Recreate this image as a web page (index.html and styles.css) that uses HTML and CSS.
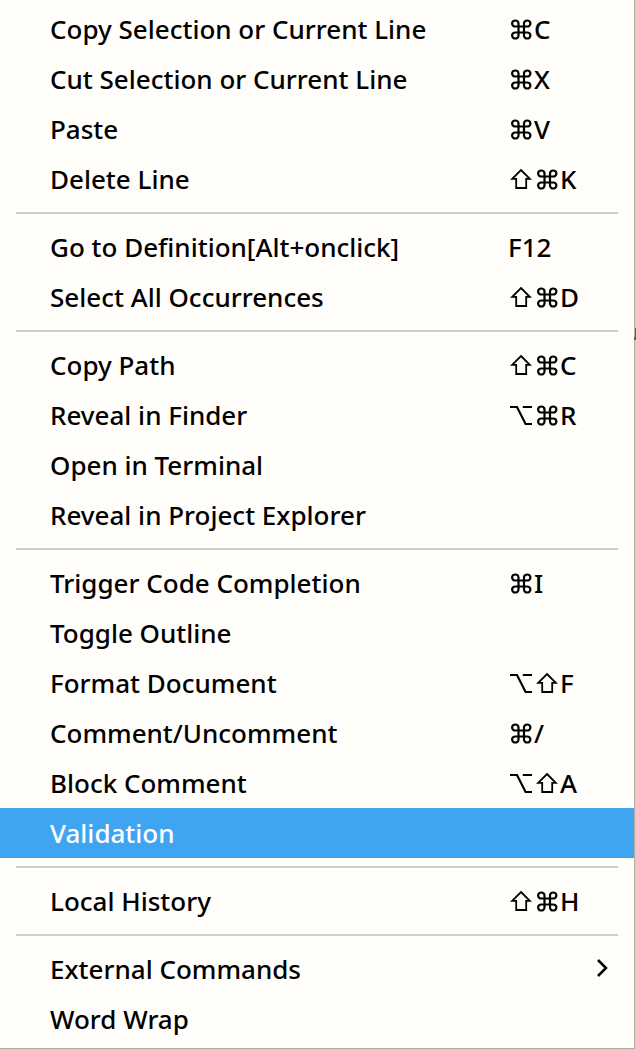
FILE: index.html
```html
<!DOCTYPE html>
<html lang="en">
<head>
<meta charset="utf-8">
<title>Editor context menu</title>
<link rel="stylesheet" href="styles.css">
</head>
<body>
<svg class="defs" aria-hidden="true">
  <symbol id="cmd" viewBox="0 0 26 22">
    <path d="M10.500 8.200V5.500A3.200 3 0 1 0 7.300 8.500H19.200A3.200 3 0 1 0 16 5.500V17.500A3.200 3 0 1 0 19.200 14.500H7.300A3.200 3 0 1 0 10.500 17.500Z" fill="none" stroke="currentColor" stroke-width="2.200"/>
  </symbol>
  <symbol id="shift" viewBox="0 0 26 22">
    <path d="M13 2 21.800 10.800H18.200V20H8.200V10.800H4.200Z" fill="none" stroke="currentColor" stroke-width="1.800"/>
  </symbol>
  <symbol id="opt" viewBox="0 0 26 22">
    <path d="M2 3H9L17.600 20H24M14.800 3H24" fill="none" stroke="currentColor" stroke-width="2.200"/>
  </symbol>
</svg>
<div class="menu" role="menu">
  <div class="group" role="group">
    <button class="item" role="menuitem"><span>Copy Selection or Current Line</span><kbd class="keys"><svg class="sym" role="img" aria-label="Command"><use href="#cmd"/></svg>C</kbd></button>
    <button class="item" role="menuitem"><span>Cut Selection or Current Line</span><kbd class="keys"><svg class="sym" role="img" aria-label="Command"><use href="#cmd"/></svg>X</kbd></button>
    <button class="item" role="menuitem"><span>Paste</span><kbd class="keys"><svg class="sym" role="img" aria-label="Command"><use href="#cmd"/></svg>V</kbd></button>
    <button class="item" role="menuitem"><span>Delete Line</span><kbd class="keys"><svg class="sym" role="img" aria-label="Shift"><use href="#shift"/></svg><svg class="sym" role="img" aria-label="Command"><use href="#cmd"/></svg>K</kbd></button>
  </div>
  <hr class="rule">
  <div class="group" role="group">
    <button class="item" role="menuitem"><span>Go to Definition[Alt+onclick]</span><kbd class="keys">F12</kbd></button>
    <button class="item" role="menuitem"><span>Select All Occurrences</span><kbd class="keys"><svg class="sym" role="img" aria-label="Shift"><use href="#shift"/></svg><svg class="sym" role="img" aria-label="Command"><use href="#cmd"/></svg>D</kbd></button>
  </div>
  <hr class="rule">
  <div class="group" role="group">
    <button class="item" role="menuitem"><span>Copy Path</span><kbd class="keys"><svg class="sym" role="img" aria-label="Shift"><use href="#shift"/></svg><svg class="sym" role="img" aria-label="Command"><use href="#cmd"/></svg>C</kbd></button>
    <button class="item" role="menuitem"><span>Reveal in Finder</span><kbd class="keys"><svg class="sym" role="img" aria-label="Option"><use href="#opt"/></svg><svg class="sym" role="img" aria-label="Command"><use href="#cmd"/></svg>R</kbd></button>
    <button class="item" role="menuitem"><span>Open in Terminal</span></button>
    <button class="item" role="menuitem"><span>Reveal in Project Explorer</span></button>
  </div>
  <hr class="rule">
  <div class="group" role="group">
    <button class="item" role="menuitem"><span>Trigger Code Completion</span><kbd class="keys"><svg class="sym" role="img" aria-label="Command"><use href="#cmd"/></svg>I</kbd></button>
    <button class="item" role="menuitem"><span>Toggle Outline</span></button>
    <button class="item" role="menuitem"><span>Format Document</span><kbd class="keys"><svg class="sym" role="img" aria-label="Option"><use href="#opt"/></svg><svg class="sym" role="img" aria-label="Shift"><use href="#shift"/></svg>F</kbd></button>
    <button class="item" role="menuitem"><span>Comment/Uncomment</span><kbd class="keys"><svg class="sym" role="img" aria-label="Command"><use href="#cmd"/></svg>/</kbd></button>
    <button class="item" role="menuitem"><span>Block Comment</span><kbd class="keys"><svg class="sym" role="img" aria-label="Option"><use href="#opt"/></svg><svg class="sym" role="img" aria-label="Shift"><use href="#shift"/></svg>A</kbd></button>
    <button class="item active" role="menuitem"><span>Validation</span></button>
  </div>
  <hr class="rule">
  <div class="group" role="group">
    <button class="item" role="menuitem"><span>Local History</span><kbd class="keys"><svg class="sym" role="img" aria-label="Shift"><use href="#shift"/></svg><svg class="sym" role="img" aria-label="Command"><use href="#cmd"/></svg>H</kbd></button>
  </div>
  <hr class="rule">
  <div class="group" role="group">
    <button class="item" role="menuitem" aria-haspopup="menu"><span>External Commands</span><svg class="chevron" viewBox="0 0 12 20" aria-hidden="true"><path d="M2 1 10 9 2 17"/></svg></button>
    <button class="item" role="menuitem"><span>Word Wrap</span></button>
  </div>
</div>
<div class="marker"></div>
</body>
</html>
```
FILE: styles.css
```css
body {
  margin: 0;
  background: #d8cfc0;
}

.defs {
  position: absolute;
  width: 0;
  height: 0;
}

.menu {
  margin-right: 1px;
  padding: 4px 0;
  border: solid #b4b0a0;
  border-width: 0 1px 1px 0;
  background: #fffefb;
}

.group {
  display: flex;
  flex-direction: column;
}

.item {
  display: flex;
  align-items: center;
  justify-content: space-between;
  height: 50px;
  margin: 0;
  padding: 0 26px 0 50px;
  border: 0;
  background: none;
  color: #000;
  font: 500 26px/50px "Noto Sans", "Open Sans", sans-serif;
  text-align: left;
  white-space: nowrap;
}

.active {
  background: #40a5f1;
  color: #fff;
}

.keys {
  display: flex;
  align-items: center;
  width: 100px;
  font: inherit;
}

.sym {
  width: 26px;
  height: 22px;
}

.rule {
  height: 2px;
  margin: 8px 16px;
  border: 0;
  background: #cdcdd0;
}

.chevron {
  width: 12px;
  height: 20px;
  fill: none;
  stroke: #000;
  stroke-width: 2.5px;
}

.marker {
  position: absolute;
  top: 328px;
  right: 0;
  width: 2px;
  height: 12px;
  background: #108070;
  clip-path: polygon(50% 0, 100% 0, 100% 100%, 0 100%, 0 75%, 50% 75%);
}
```
